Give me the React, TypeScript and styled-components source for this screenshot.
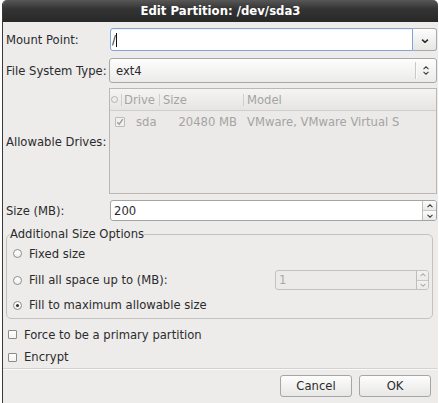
import React from "react";
import styled, { createGlobalStyle } from "styled-components";

const Global = createGlobalStyle`
  html, body { margin: 0; padding: 0; background: #ffffff; }
  body { font-family: "DejaVu Sans", "Noto Sans", sans-serif; font-size: 11.6px; color: #2b2b2b; }
  * { box-sizing: border-box; }
`;

const Window = styled.div`
  margin-left: 2px;
  width: 436px;
  height: 403px;
  display: flex;
  flex-direction: column;
  background: #edeceb;
  border-left: 1px solid #3a3a3a;
  border-radius: 5px 5px 0 0;
  overflow: hidden;
`;

const TitleBar = styled.div`
  flex: none;
  height: 22px;
  display: flex;
  align-items: center;
  justify-content: center;
  background: linear-gradient(#575757, #343434 40%, #282828);
  color: #ffffff;
  font-weight: bold;
  font-size: 11.7px;
`;

const Body = styled.div`
  flex: 1;
  display: flex;
  flex-direction: column;
  padding: 3px 1px 0 2px;
`;

const FormRow = styled.div<{ $mt: number; $h: number }>`
  flex: none;
  display: flex;
  align-items: center;
  margin-top: ${(p) => p.$mt}px;
  height: ${(p) => p.$h}px;
`;

const Label = styled.div`
  flex: none;
  width: 104px;
  padding-left: 1px;
  padding-top: 1px;
  white-space: nowrap;
`;

const ComboEntry = styled.div`
  flex: 1;
  height: 100%;
  margin-left: 1px;
  display: flex;
`;

const EntryField = styled.div`
  flex: 1;
  display: flex;
  align-items: center;
  padding-left: 1px;
  padding-top: 1px;
  background: #ffffff;
  border: 1px solid #7ea6d6;
  border-radius: 3px 0 0 3px;
  box-shadow: inset 0 1px 1px rgba(0, 0, 0, 0.06);
`;

const Caret = styled.span`
  display: inline-block;
  width: 1px;
  height: 14px;
  background: #111;
`;

const ComboButton = styled.div`
  flex: none;
  width: 24px;
  display: flex;
  align-items: center;
  justify-content: center;
  padding-top: 2px;
  border: 1px solid #a9a9a9;
  border-left: none;
  border-radius: 0 3px 3px 0;
  background: linear-gradient(#fdfdfd, #e6e6e5);
`;

const ComboBox = styled.div`
  flex: 1;
  height: 100%;
  display: flex;
  align-items: center;
  border: 1px solid #a8a8a8;
  border-radius: 3px;
  background: linear-gradient(#fdfdfd, #ebebea);
  padding-left: 6px;
`;

const ComboText = styled.span`
  flex: 1;
`;

const ComboSep = styled.div`
  width: 1px;
  height: 17px;
  background: #c9c9c8;
  box-shadow: 1px 0 0 #fafafa;
`;

const ArrowStack = styled.div<{ $w: number }>`
  width: ${(p) => p.$w}px;
  display: flex;
  flex-direction: column;
  align-items: center;
  gap: 1px;
`;

const Table = styled.div`
  flex: 1;
  height: 100%;
  display: flex;
  flex-direction: column;
  border: 1px solid #b9b8b6;
  background: #ebeae8;
  color: #a4a4a3;
`;

const TableHead = styled.div`
  height: 22px;
  display: flex;
  align-items: center;
  background: linear-gradient(#f5f4f3, #e6e5e4);
  border-bottom: 1px solid #cfcecc;
`;

const HeadCell = styled.div<{ $w?: number; $pl: number }>`
  ${(p) => (p.$w ? `width: ${p.$w}px; flex: none;` : "flex: 1;")}
  padding-left: ${(p) => p.$pl}px;
  display: flex;
  align-items: center;
  white-space: nowrap;
`;

const HeadSep = styled.div`
  flex: none;
  width: 1px;
  height: 12px;
  background: #cfcecd;
`;

const HeadCircle = styled.span`
  width: 7px;
  height: 7px;
  border-radius: 50%;
  border: 1px solid #b3b3b2;
`;

const TableRow = styled.div`
  height: 22px;
  display: flex;
  align-items: center;
`;

const Cell = styled.div<{ $w?: number; $pl?: number; $right?: boolean }>`
  ${(p) => (p.$w ? `width: ${p.$w}px; flex: none;` : "flex: 1;")}
  padding-left: ${(p) => p.$pl ?? 0}px;
  padding-right: ${(p) => (p.$right ? 4 : 0)}px;
  white-space: nowrap;
  overflow: hidden;
  display: flex;
  justify-content: ${(p) => (p.$right ? "flex-end" : "flex-start")};
  align-items: center;
`;

const DisabledCheck = styled.span`
  width: 10px;
  height: 10px;
  border: 1px solid #bcbcbb;
  background: #f1f0ef;
  border-radius: 1px;
  display: flex;
  align-items: center;
  justify-content: center;
`;

const SpinBox = styled.div<{ $disabled?: boolean; $w?: number }>`
  ${(p) => (p.$w ? `width: ${p.$w}px; flex: none; margin-left: auto;` : "flex: 1; margin-left: 1px;")}
  height: ${(p) => (p.$disabled ? "20px" : "100%")};
  display: flex;
  border: 1px solid ${(p) => (p.$disabled ? "#c3c2c0" : "#a4a4a4")};
  border-radius: 3px;
  background: ${(p) => (p.$disabled ? "#ecebe9" : "#ffffff")};
  color: ${(p) => (p.$disabled ? "#a8a8a7" : "#2b2b2b")};
  overflow: hidden;
`;

const SpinText = styled.div`
  flex: 1;
  display: flex;
  align-items: center;
  padding-left: 3px;
`;

const SpinButtons = styled.div<{ $w: number }>`
  flex: none;
  width: ${(p) => p.$w}px;
  display: flex;
  flex-direction: column;
  border-left: 1px solid #bdbdbc;
`;

const SpinHalf = styled.div<{ $bottom?: boolean; $disabled?: boolean }>`
  flex: 1;
  display: flex;
  align-items: center;
  justify-content: center;
  background: ${(p) => (p.$disabled ? "linear-gradient(#f3f2f1, #ebeae9)" : "linear-gradient(#fcfcfc, #e9e9e8)")};
  border-top: ${(p) => (p.$bottom ? "1px solid #c6c6c5" : "none")};
`;

const Group = styled.fieldset`
  flex: none;
  margin: 6px 4px 0 1px;
  padding: 0 3px 2px 3px;
  border: 1px solid #c3c2c0;
  border-radius: 5px;
  min-width: 0;
`;

const Legend = styled.legend`
  padding: 0;
  font-size: 11.6px;
  line-height: 14px;
`;

const OptionRow = styled.div<{ $h: number }>`
  height: ${(p) => p.$h}px;
  display: flex;
  align-items: center;
  padding-left: 3px;
  gap: 7px;
  white-space: nowrap;
`;

const Radio = styled.span<{ $on?: boolean }>`
  flex: none;
  width: 9px;
  height: 9px;
  border-radius: 50%;
  border: 1px solid #8d8d8d;
  background: linear-gradient(#ffffff, #f0f0f0);
  display: flex;
  align-items: center;
  justify-content: center;
  &::after {
    content: "";
    width: 3px;
    height: 3px;
    border-radius: 50%;
    background: ${(p) => (p.$on ? "#333" : "transparent")};
  }
`;

const CheckRow = styled.div<{ $mt: number; $h: number }>`
  flex: none;
  margin-top: ${(p) => p.$mt}px;
  height: ${(p) => p.$h}px;
  display: flex;
  align-items: center;
  padding-left: 3px;
  gap: 7px;
`;

const CheckBox = styled.span`
  flex: none;
  width: 9px;
  height: 9px;
  border: 1px solid #8b8b8b;
  border-radius: 1px;
  background: linear-gradient(#ffffff, #f2f2f2);
`;

const Separator = styled.div`
  flex: none;
  margin-left: -2px;
  height: 2px;
  border-top: 1px solid #d3d2d0;
  border-bottom: 1px solid #fafafa;
`;

const ButtonRow = styled.div`
  flex: none;
  margin-top: 5px;
  display: flex;
  justify-content: flex-end;
  gap: 7px;
  padding-right: 6px;
`;

const Button = styled.button`
  width: 72px;
  height: 22px;
  font-family: "DejaVu Sans", sans-serif;
  font-size: 11.6px;
  color: #2b2b2b;
  border: 1px solid #a6a6a6;
  border-radius: 3px;
  background: linear-gradient(#fdfdfd, #e7e7e6);
  padding: 0;
`;

const Chevron = ({
  dir,
  color = "#3a3a3a",
  w = 7,
  sw = 1.2,
}: {
  dir: "up" | "down";
  color?: string;
  w?: number;
  sw?: number;
}) => (
  <svg width={w} height={4} viewBox="0 0 7 4">
    <path
      d={dir === "down" ? "M0.6 0.6 L3.5 3.4 L6.4 0.6" : "M0.6 3.4 L3.5 0.6 L6.4 3.4"}
      fill="none"
      stroke={color}
      strokeWidth={sw}
    />
  </svg>
);

export default function App() {
  return (
    <>
      <Global />
      <Window>
        <TitleBar>Edit Partition: /dev/sda3</TitleBar>
        <Body>
          <FormRow $mt={3} $h={23}>
            <Label>Mount Point:</Label>
            <ComboEntry>
              <EntryField>
                <span>/</span>
                <Caret />
              </EntryField>
              <ComboButton>
                <Chevron dir="down" color="#2e2e2e" w={8} sw={1.5} />
              </ComboButton>
            </ComboEntry>
          </FormRow>

          <FormRow $mt={7} $h={25}>
            <Label>File System Type:</Label>
            <ComboBox>
              <ComboText>ext4</ComboText>
              <ComboSep />
              <ArrowStack $w={20}>
                <Chevron dir="up" w={6} />
                <Chevron dir="down" w={6} />
              </ArrowStack>
            </ComboBox>
          </FormRow>

          <FormRow $mt={5} $h={106}>
            <Label>Allowable Drives:</Label>
            <Table>
              <TableHead>
                <HeadCell $w={11} $pl={1}>
                  <HeadCircle />
                </HeadCell>
                <HeadSep />
                <HeadCell $w={37} $pl={2}>Drive</HeadCell>
                <HeadSep />
                <HeadCell $w={83} $pl={3}>Size</HeadCell>
                <HeadSep />
                <HeadCell $pl={3}>Model</HeadCell>
              </TableHead>
              <TableRow>
                <Cell $w={20} $pl={5}>
                  <DisabledCheck>
                    <svg width="8" height="8" viewBox="0 0 8 8">
                      <path d="M1.2 4.2 L3.2 6.2 L6.8 1.2" fill="none" stroke="#9b9b9a" strokeWidth="1.3" />
                    </svg>
                  </DisabledCheck>
                </Cell>
                <Cell $w={40} $pl={6}>sda</Cell>
                <Cell $w={71} $right>20480 MB</Cell>
                <Cell $pl={6}>VMware, VMware Virtual S</Cell>
              </TableRow>
            </Table>
          </FormRow>

          <FormRow $mt={6} $h={21}>
            <Label>Size (MB):</Label>
            <SpinBox>
              <SpinText>200</SpinText>
              <SpinButtons $w={14}>
                <SpinHalf>
                  <Chevron dir="up" w={6} />
                </SpinHalf>
                <SpinHalf $bottom>
                  <Chevron dir="down" w={6} />
                </SpinHalf>
              </SpinButtons>
            </SpinBox>
          </FormRow>

          <Group>
            <Legend>Additional Size Options</Legend>
            <OptionRow $h={25}>
              <Radio />
              <span>Fixed size</span>
            </OptionRow>
            <OptionRow $h={28}>
              <Radio />
              <span>Fill all space up to (MB):</span>
              <SpinBox $disabled $w={154}>
                <SpinText>1</SpinText>
                <SpinButtons $w={12}>
                  <SpinHalf $disabled>
                    <Chevron dir="up" w={6} color="#b0b0af" />
                  </SpinHalf>
                  <SpinHalf $disabled $bottom>
                    <Chevron dir="down" w={6} color="#b0b0af" />
                  </SpinHalf>
                </SpinButtons>
              </SpinBox>
            </OptionRow>
            <OptionRow $h={22}>
              <Radio $on />
              <span>Fill to maximum allowable size</span>
            </OptionRow>
          </Group>

          <CheckRow $mt={4} $h={23}>
            <CheckBox />
            <span>Force to be a primary partition</span>
          </CheckRow>
          <CheckRow $mt={0} $h={22}>
            <CheckBox />
            <span>Encrypt</span>
          </CheckRow>

          <Separator />

          <ButtonRow>
            <Button>Cancel</Button>
            <Button>OK</Button>
          </ButtonRow>
        </Body>
      </Window>
    </>
  );
}
